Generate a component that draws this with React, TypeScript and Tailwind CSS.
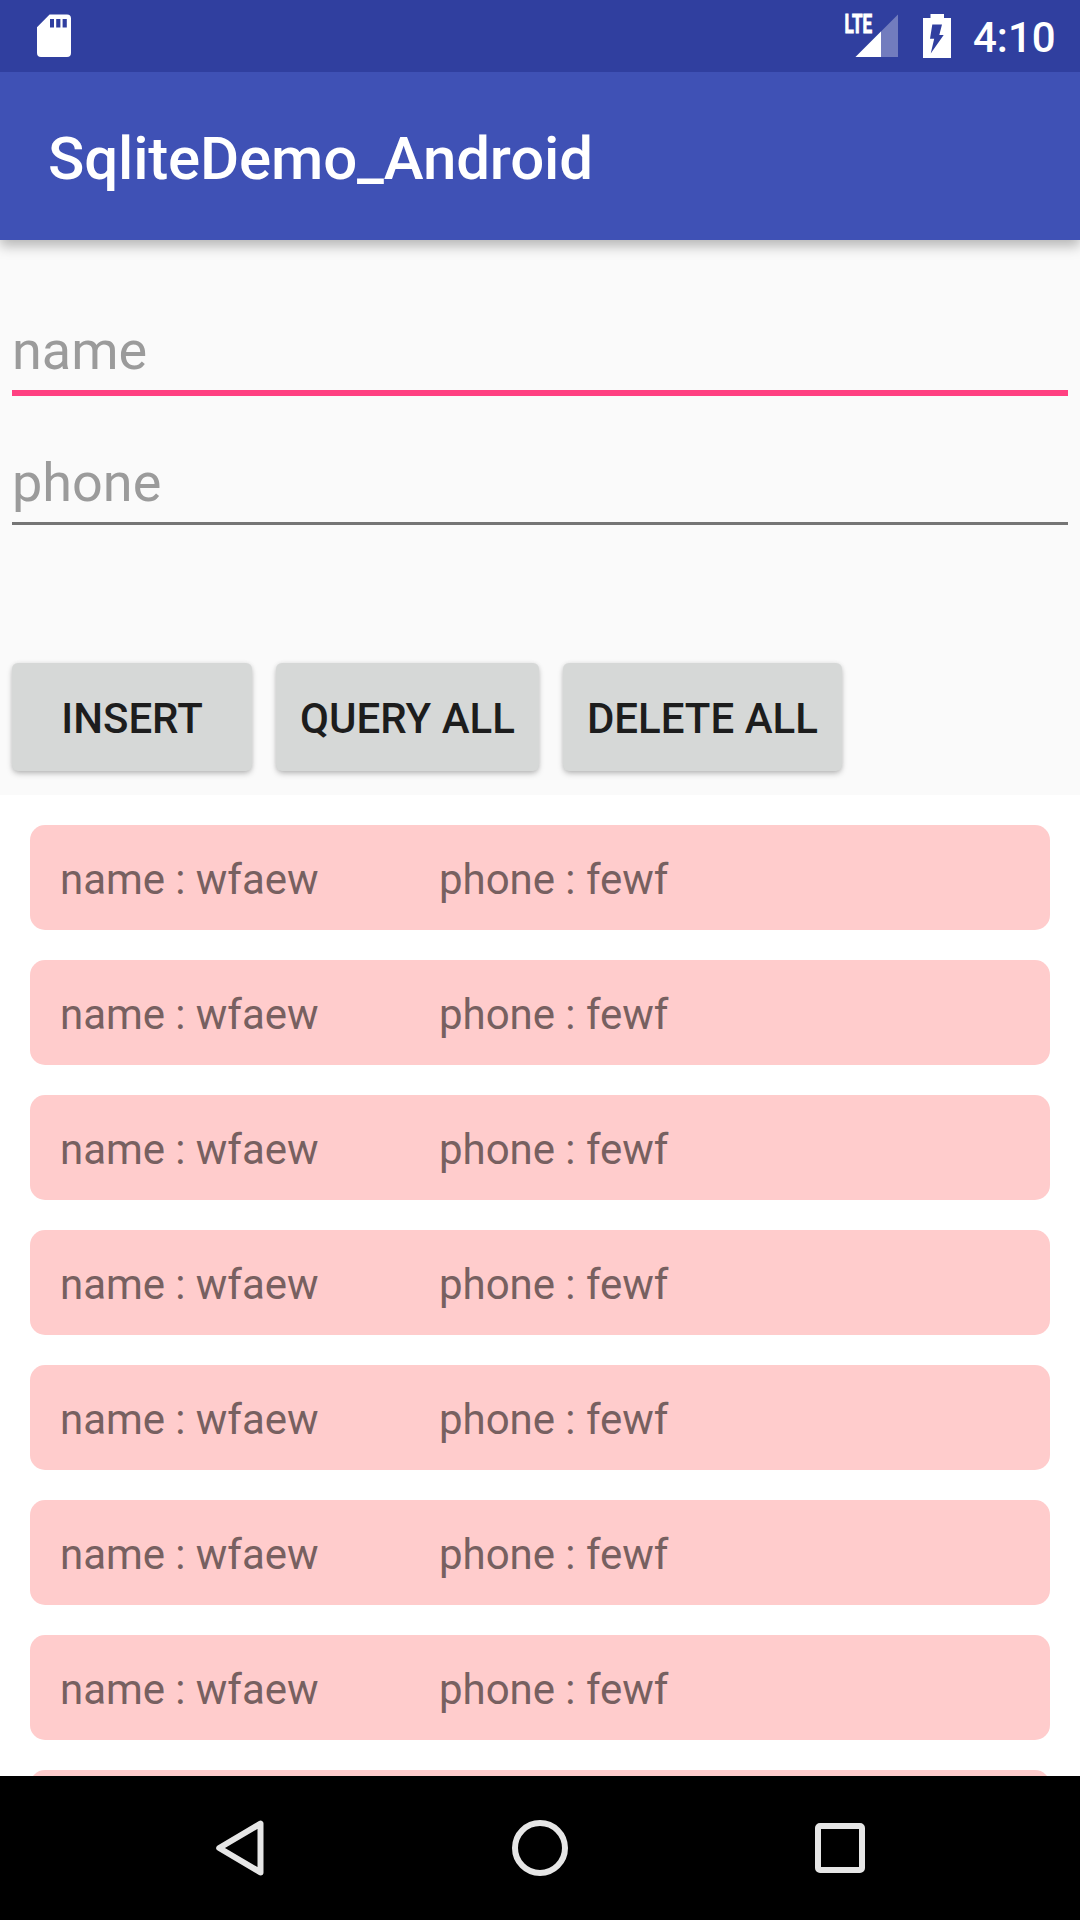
const rows = Array.from({ length: 7 }, () => ({ name: 'wfaew', phone: 'fewf' }));

function StatusBar() {
  return (
    <div className="z-20 flex h-[72px] shrink-0 items-center justify-between bg-[#303f9f] text-white">
      <svg width="48" height="72" viewBox="30 0 48 72" className="ml-[30px]" fill="#fff">
        <path
          fillRule="evenodd"
          d="M49.6 14.5H67a4 4 0 0 1 4 4V53a4 4 0 0 1-4 4H41a4 4 0 0 1-4-4V27.2ZM50 19v8.5h4V19ZM56.2 19v8.5h4.2V19ZM62.6 19v8.5h4.2V19Z"
        />
      </svg>
      <div className="flex h-full items-center">
        <svg width="120" height="72" viewBox="840 0 120 72">
          <path d="M898 14.5V57H855.5Z" fill="#fff" fillOpacity="0.32" />
          <path d="M881 31.5V57H855.5Z" fill="#fff" />
          <text
            x="844.6"
            y="33.4"
            fontFamily="Roboto, sans-serif"
            fontSize="25.5"
            fontWeight="700"
            textLength="27.6"
            lengthAdjust="spacingAndGlyphs"
            fill="#fff"
            stroke="#fff"
            strokeWidth="0.9"
          >
            LTE
          </text>
          <path
            fillRule="evenodd"
            fill="#fff"
            d="M930.5 14H944V18H951V58H923V18H930.5ZM932.3 24.5 930 38.8H934.2L930.7 53.5 943.7 35H939.3L942 24.5Z"
          />
        </svg>
        <span className="mr-6 w-24 pt-1 pl-[13px] text-[42px] leading-[72px] font-medium whitespace-nowrap">4:10</span>
      </div>
    </div>
  );
}

function Field({ label, focused }: { label: string; focused?: boolean }) {
  return (
    <div
      className={
        focused
          ? 'h-[78px] border-b-6 border-[#ff4081] text-[54px] leading-[65px] text-[#9b9b9b]'
          : 'mt-[54px] h-[75px] border-b-3 border-[#757575] text-[54px] leading-[65px] text-[#9b9b9b]'
      }
    >
      {label}
    </div>
  );
}

function Button({ label }: { label: string }) {
  return (
    <button className="h-[108px] min-w-60 rounded-[6px] bg-[#d6d8d7] px-6 pt-[3px] text-[42px] leading-[48px] font-medium whitespace-nowrap text-[#1d1d1d] shadow-[0_3px_6px_-1px_rgba(0,0,0,0.28),0_0_4px_rgba(0,0,0,0.08)]">
      {label}
    </button>
  );
}

function NavBar() {
  return (
    <div className="flex h-36 shrink-0 items-center justify-center gap-[216px] bg-black">
      <svg width="84" height="144" viewBox="198 0 84 144" fill="none" stroke="#e6e6e6" strokeWidth="6" strokeLinejoin="round">
        <path d="M260.5 47.6V96.4L219.2 72Z" />
      </svg>
      <svg width="84" height="144" viewBox="498 0 84 144" fill="none" stroke="#e6e6e6" strokeWidth="6">
        <circle cx="540" cy="72" r="25" />
      </svg>
      <svg width="84" height="144" viewBox="798 0 84 144" fill="none" stroke="#e6e6e6" strokeWidth="6">
        <rect x="818" y="50" width="44" height="44" rx="2" />
      </svg>
    </div>
  );
}

export default function App() {
  return (
    <div className="flex h-[1920px] w-[1080px] flex-col overflow-hidden bg-[#fafafa] font-['Roboto',sans-serif]">
      <StatusBar />
      <header className="z-10 flex h-[168px] shrink-0 items-center bg-[#3f51b5] pt-[5px] pl-12 text-[60px] leading-[72px] font-medium tracking-[-0.15px] text-white shadow-[0_6px_12px_rgba(0,0,0,0.28)]">
        <h1>SqliteDemo_Android</h1>
      </header>
      <section className="h-[555px] shrink-0 px-3 pt-[78px]">
        <Field label="name" focused />
        <Field label="phone" />
        <div className="mt-[138px] flex gap-6">
          <Button label="INSERT" />
          <Button label="QUERY ALL" />
          <Button label="DELETE ALL" />
        </div>
      </section>
      <main className="flex min-h-0 flex-1 flex-col gap-[30px] overflow-hidden bg-white px-[30px] pt-[30px]">
        {rows.map((row, i) => (
          <div
            key={i}
            className="flex h-[105px] shrink-0 rounded-[15px] bg-[#ffcccc] px-[30px] pt-[30px] text-[42px] leading-[49px] text-[#776060]"
          >
            <span className="w-[379px] tracking-[-0.05px]">name : {row.name}</span>
            <span className="tracking-[-0.03px]">phone : {row.phone}</span>
          </div>
        ))}
        <div className="h-[105px] shrink-0 rounded-[15px] bg-[#ffcccc]" />
      </main>
      <NavBar />
    </div>
  );
}
